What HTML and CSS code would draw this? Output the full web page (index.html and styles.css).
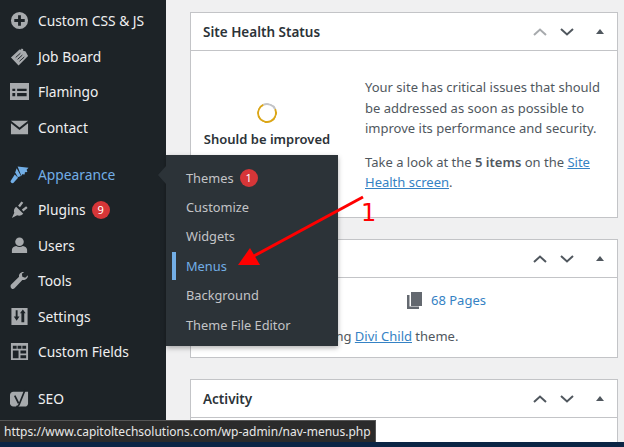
FILE: index.html
```html
<!DOCTYPE html>
<html lang="en">
<head>
<meta charset="utf-8">
<title>Dashboard</title>
<link rel="stylesheet" href="styles.css">
</head>
<body>
<div class="page">
  <nav class="sidebar">
    <a class="item"><svg class="ico" viewBox="0 0 20 20"><path fill-rule="evenodd" d="M10 1a9 9 0 1 0 0 18 9 9 0 0 0 0-18zM8.500 4.500h3v4h4v3h-4v4h-3v-4h-4v-3h4z"/></svg>Custom CSS &amp; JS</a>
    <a class="item"><svg class="ico" viewBox="0 0 20 20"><path d="M1 11 10 2.500l1.500.5.800-1.500 1.700.8-.5 1.400 3 1L19 9.500 9 19.500z"/><path class="cut" d="M6 11l5-4.500M8 13l5-4.500M10 15l5-4.500"/></svg>Job Board</a>
    <a class="item"><svg class="ico" viewBox="0 0 20 20"><path fill-rule="evenodd" d="M0 1h20v18H0zM2.500 7v2.500h3V7zm5 0v2.500h10V7zm-5 4.500V15h3v-3.500zm5 0V15h10v-3.500z"/></svg>Flamingo</a>
    <a class="item"><svg class="ico" viewBox="0 0 20 20"><path d="M1 3h18L10 10zM1 5.500 10 12.500l9-7V17H1z"/></svg>Contact</a>
    <a class="item gap active"><svg class="ico" viewBox="0 0 20 20"><path d="M8 1.500 19.500 3l-2 2 .8 2.300-2.600.2-.3 2.500-2.600-.2-.8 1.700z"/><path d="M5.500 8 7 3.500l4.500 8-3.300 1.300z"/><path d="M5 10l3.500 3.500-5 5.500Q1 19.500.5 17z"/></svg>Appearance</a>
    <a class="item"><svg class="ico" viewBox="0 0 20 20"><path d="M2 19l2.500-5.500C3.500 11 4.500 8.500 6.500 7l7.500 7.500c-2 2-4.500 2.500-6.500 1.500z"/><path d="M8.500 6l3.500-4.500 2 1.500-3.500 4.500zM12.500 10l4.500-3.500 1.500 2L14 12z"/></svg>Plugins<span class="count">9</span></a>
    <a class="item"><svg class="ico" viewBox="0 0 20 20"><circle cx="10" cy="6" r="4.500"/><path d="M2 18v-3.500c0-2 2-3.500 4.500-4 2 1.500 5 1.500 7 0 2.500.5 4.500 2 4.500 4V18z"/></svg>Users</a>
    <a class="item"><svg class="ico" viewBox="0 0 20 20"><path d="M14 1c-3 0-5 2.500-4.500 5L1 14.500C0 16 1 19 3 19c1 0 1.500-.5 2-1l8-8.500c3 .5 6-1.500 6-5l-3 2.500-3-1-.5-3L15 1z"/></svg>Tools</a>
    <a class="item"><svg class="ico" viewBox="0 0 20 20"><path fill-rule="evenodd" d="M1.500 1h17v18h-17zM6 3.500V10H4l3 4.500L10 10H8V3.500zm6 3H10.500L13.500 2.500 16.500 6.500H15V16h-3z"/></svg>Settings</a>
    <a class="item"><svg class="ico" viewBox="0 0 20 20"><path fill-rule="evenodd" d="M1 1h18v18H1zM3 4v3h4V4zm5 0v3h4V4zm5 0v3h4V4zM3 9v8h6V9zm8 0v3h6V9zm0 5v3h6v-3z"/></svg>Custom Fields</a>
    <a class="item gap"><svg class="ico" viewBox="0 0 20 20"><path d="M3.500 3H19v12c0 2.500-1.500 3.500-3.500 3.500H3.500C1.500 18.500 0 17 0 15V6.500C0 4.500 1.500 3 3.500 3z"/><path class="cut-y" d="M5 7l4 8M16 0.500 9.500 16.500C9 18 8 18.500 6.500 18.500"/></svg>SEO</a>
  </nav>
  <main class="content">
    <section class="card health">
      <header class="head"><h2>Site Health Status</h2><div class="ctl"><svg class="chev dim" viewBox="0 0 14 8"><path d="M1 7l6-5.500L13 7"/></svg><svg class="chev" viewBox="0 0 14 8"><path d="M1 1l6 5.500L13 1"/></svg><i class="tri"></i></div></header>
      <div class="health-body">
        <div class="gauge"><span class="ring"></span><strong>Should be improved</strong></div>
        <div class="msg">
          <p>Your site has critical issues that should be addressed as soon as possible to improve its performance and security.</p>
          <p>Take a look at the <strong>5 items</strong> on the <a href="#">Site Health screen</a>.</p>
        </div>
      </div>
    </section>
    <section class="card glance">
      <header class="head"><h2>At a Glance</h2><div class="ctl"><svg class="chev" viewBox="0 0 14 8"><path d="M1 7l6-5.500L13 7"/></svg><svg class="chev" viewBox="0 0 14 8"><path d="M1 1l6 5.500L13 1"/></svg><i class="tri"></i></div></header>
      <div class="glance-body">
        <div class="pages"><svg class="pg" viewBox="0 0 15 17"><path d="M4 0h11v14H4z"/><path d="M0 3h2.500v11.500H12V17H0z"/></svg><a>68 Pages</a></div>
        <p class="theme">WordPress 6.1.1 running <a href="#">Divi Child</a> theme.</p>
      </div>
    </section>
    <section class="card activity">
      <header class="head"><h2>Activity</h2><div class="ctl"><svg class="chev" viewBox="0 0 14 8"><path d="M1 7l6-5.500L13 7"/></svg><svg class="chev" viewBox="0 0 14 8"><path d="M1 1l6 5.500L13 1"/></svg><i class="tri"></i></div></header>
    </section>
  </main>

  <div class="flyout">
    <a class="sub">Themes<span class="count">1</span></a>
    <a class="sub">Customize</a>
    <a class="sub">Widgets</a>
    <a class="sub cur">Menus</a>
    <a class="sub">Background</a>
    <a class="sub">Theme File Editor</a>
  </div>
  <i class="notch"></i>

  <svg class="pointer" viewBox="0 0 624 447"><path class="shaft" d="M363 197 252 257"/><path class="head-a" d="M238 265 250 248 260 265z"/></svg>
  <span class="mark">1</span>

  <div class="tip">https://www.capitoltechsolutions.com/wp-admin/nav-menus.php</div>
  <div class="strip"></div>
</div>
</body>
</html>
```

FILE: styles.css
```css
* { box-sizing: border-box; }
html, body { margin: 0; padding: 0; }
body { font-family: "Noto Sans", "Open Sans", sans-serif; font-size: 13px; color: #50575e; }
.page { position: relative; width: 624px; height: 447px; overflow: hidden; display: flex; background: #f0f0f1; }

.sidebar { width: 166px; flex: none; background: #1d2327; padding-top: 3px; }
.item { display: flex; align-items: center; height: 35.500px; padding-left: 10px; font-size: 13.800px; color: #f0f0f1; }
.item.gap { margin-top: 11.500px; }
.item.active { color: #72aee6; }
.ico { width: 19px; height: 19px; margin-right: 9px; flex: none; fill: #a7aaad; }
.cut { fill: none; stroke: #1d2327; stroke-width: 1; }
.cut-y { fill: none; stroke: #1d2327; stroke-width: 1.800; }
.active .ico { fill: #72aee6; }
.count { display: inline-flex; align-items: center; justify-content: center; width: 18px; height: 18px; border-radius: 50%; background: #d63638; color: #fff; font-size: 11px; margin-left: 6px; }

.content { flex: 1; padding: 12px 6px 0 24px; display: flex; flex-direction: column; }
.card { flex: none; background: #fff; border: 1px solid #c3c4c7; }
.head { display: flex; align-items: center; justify-content: space-between; height: 38px; padding: 1px 12px 0; border-bottom: 1px solid #c3c4c7; }
.head h2 { margin: 0; font-size: 13.500px; font-weight: 600; color: #2c3338; }
.ctl { display: flex; align-items: center; }
.chev { width: 14px; height: 8px; margin-right: 13px; fill: none; stroke: #50575e; stroke-width: 2; }
.chev.dim { stroke: #a7aaad; }
.tri { width: 0; height: 0; margin: 0 1px 2px 9px; border: 4px solid transparent; border-top: 0; border-bottom: 5px solid #50575e; }

.health { height: 206px; }
.health-body { display: flex; padding: 26px 6px 0 11px; }
.gauge { width: 130px; flex: none; display: flex; flex-direction: column; align-items: center; padding-top: 26px; margin-right: 33px; color: #2c3338; }
.gauge strong { font-weight: 600; white-space: nowrap; margin-top: 7px; }
.ring { width: 20px; height: 20px; border-radius: 50%; border: 2px solid #dba617; border-top-color: #c3c4c7; border-right-color: #dba617; transform: rotate(20deg); }
.msg p { margin: 0 0 13px; line-height: 20.500px; }
.msg strong { font-weight: 600; }
a { color: #3582c4; }
.msg a, .theme a { color: #3582c4; text-decoration: underline; }

.glance { height: 119px; margin-top: 21px; }
.glance-body { padding-top: 13px; }
.pages { display: flex; align-items: center; padding-left: 216px; }
.pg { width: 15px; height: 17px; margin-right: 9px; fill: #646970; }
.theme { margin: 18px 0 0; padding-left: 10px; }

.activity { height: 100px; margin-top: 21px; }

.flyout { position: absolute; left: 166px; top: 155px; width: 172px; height: 191px; padding-top: 8px; background: #2c3338; box-shadow: 0 2px 5px rgba(0,0,0,.3); }
.sub { display: flex; align-items: center; height: 29.400px; padding-left: 20px; color: #c3c4c7; font-size: 12.800px; position: relative; }
.sub.cur { color: #72aee6; }
.sub.cur::before { content: ""; position: absolute; left: 6px; top: 1px; width: 4px; height: 28px; background: #72aee6; }
.notch { position: absolute; left: 158px; top: 166px; width: 0; height: 0; border: 9px solid transparent; border-left: 0; border-right: 8px solid #2c3338; }

.pointer { position: absolute; left: 0; top: 0; width: 624px; height: 447px; pointer-events: none; }
.shaft { stroke: #f00; stroke-width: 3; fill: none; }
.head-a { fill: #f00; }
.mark { position: absolute; left: 361px; top: 198px; font-family: "DejaVu Sans", sans-serif; font-size: 24px; line-height: 30px; color: #f00; }

.tip { position: absolute; left: 0; top: 420px; width: 376px; height: 22px; padding-left: 4px; line-height: 22px; background: #2b2b2b; border: 1px solid #555; border-left: 0; border-bottom: 0; color: #e8e8e8; font-size: 12px; white-space: nowrap; }
.strip { position: absolute; left: 0; right: 0; bottom: 0; height: 5px; background: #0b2545; }
```
